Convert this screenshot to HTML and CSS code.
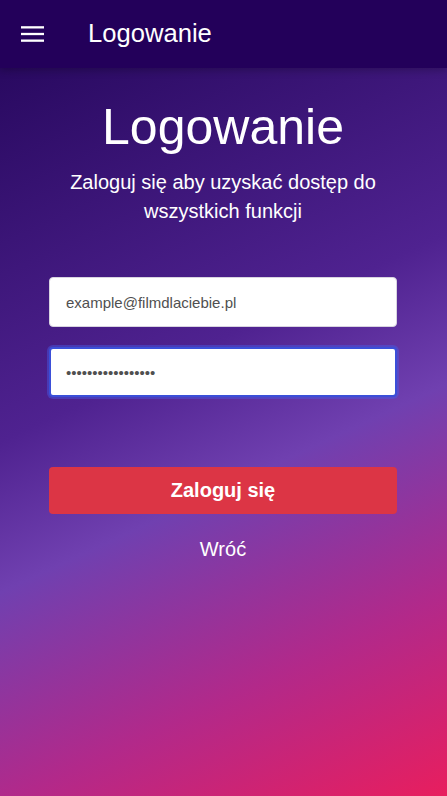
FILE: index.html
```html
<!DOCTYPE html>
<html lang="pl">
<head>
<meta charset="utf-8">
<title>Logowanie</title>
<link rel="stylesheet" href="styles.css">
</head>
<body>
<div class="page">
  <header class="topbar">
    <button class="menu-btn" type="button" aria-label="Menu">
      <svg width="23" height="16" viewBox="0 0 23 16" aria-hidden="true">
        <rect x="0" y="0.2" width="23" height="2.3" fill="#fff"/>
        <rect x="0" y="6.85" width="23" height="2.3" fill="#fff"/>
        <rect x="0" y="13.5" width="23" height="2.3" fill="#fff"/>
      </svg>
    </button>
    <span class="topbar-title">Logowanie</span>
  </header>
  <main class="content">
    <h1 class="title">Logowanie</h1>
    <p class="subtitle">Zaloguj się aby uzyskać dostęp do wszystkich funkcji</p>
    <form class="form">
      <input class="field" type="email" value="example@filmdlaciebie.pl">
      <input class="field field-focused" type="password" value="abcdefghijklmnopq">
      <button class="submit" type="button">Zaloguj się</button>
      <a class="back" href="#">Wróć</a>
    </form>
  </main>
</div>
</body>
</html>
```
FILE: styles.css
```css
* {
  box-sizing: border-box;
}

html, body {
  margin: 0;
  padding: 0;
}

body {
  font-family: "Liberation Sans", Arial, sans-serif;
  color: #fff;
}

.page {
  min-height: 100vh;
  background: linear-gradient(155deg,
    #200050 0%,
    #2a0a62 8%,
    #4f2290 44%,
    #7040b0 59%,
    #b2298a 80%,
    #e81e5e 100%);
}

.topbar {
  height: 68px;
  display: flex;
  align-items: center;
  background: #23005a;
  box-shadow: 0 2px 8px rgba(0, 0, 0, 0.25);
}

.menu-btn {
  display: flex;
  align-items: center;
  justify-content: center;
  width: 23px;
  height: 16px;
  margin: 0 0 1px 21px;
  padding: 0;
  border: 0;
  background: none;
}

.topbar-title {
  margin-left: 44px;
  font-size: 25.6px;
  line-height: 1;
  color: #fff;
}

.content {
  display: flex;
  flex-direction: column;
  align-items: center;
  padding: 0 50px 0 49px;
  text-align: center;
}

.title {
  margin: 29px 0 0;
  font-size: 50px;
  font-weight: 400;
  line-height: 60px;
}

.subtitle {
  margin: 11px 0 0;
  font-size: 20px;
  line-height: 29px;
}

.form {
  width: 348px;
  margin-top: 51px;
  display: flex;
  flex-direction: column;
  align-items: stretch;
}

.field {
  height: 50px;
  padding: 0 16px;
  border: 1px solid #d8d4e0;
  border-radius: 4px;
  background: #fff;
  color: #505050;
  font-family: "Liberation Sans", Arial, sans-serif;
  font-size: 15px;
  outline: none;
}

.field + .field {
  margin-top: 20px;
}

.field-focused {
  border: 2px solid #3b4fd8;
  padding: 0 15px;
  box-shadow: 0 0 0 2px rgba(70, 90, 230, 0.45);
}

.submit {
  margin-top: 70px;
  height: 47px;
  border: 0;
  border-radius: 4px;
  background: #dc3545;
  color: #fff;
  font-family: "Liberation Sans", Arial, sans-serif;
  font-size: 20px;
  font-weight: 700;
}

.back {
  align-self: center;
  margin-top: 23px;
  font-size: 20px;
  line-height: 24px;
  color: #fff;
  text-decoration: none;
}
```
